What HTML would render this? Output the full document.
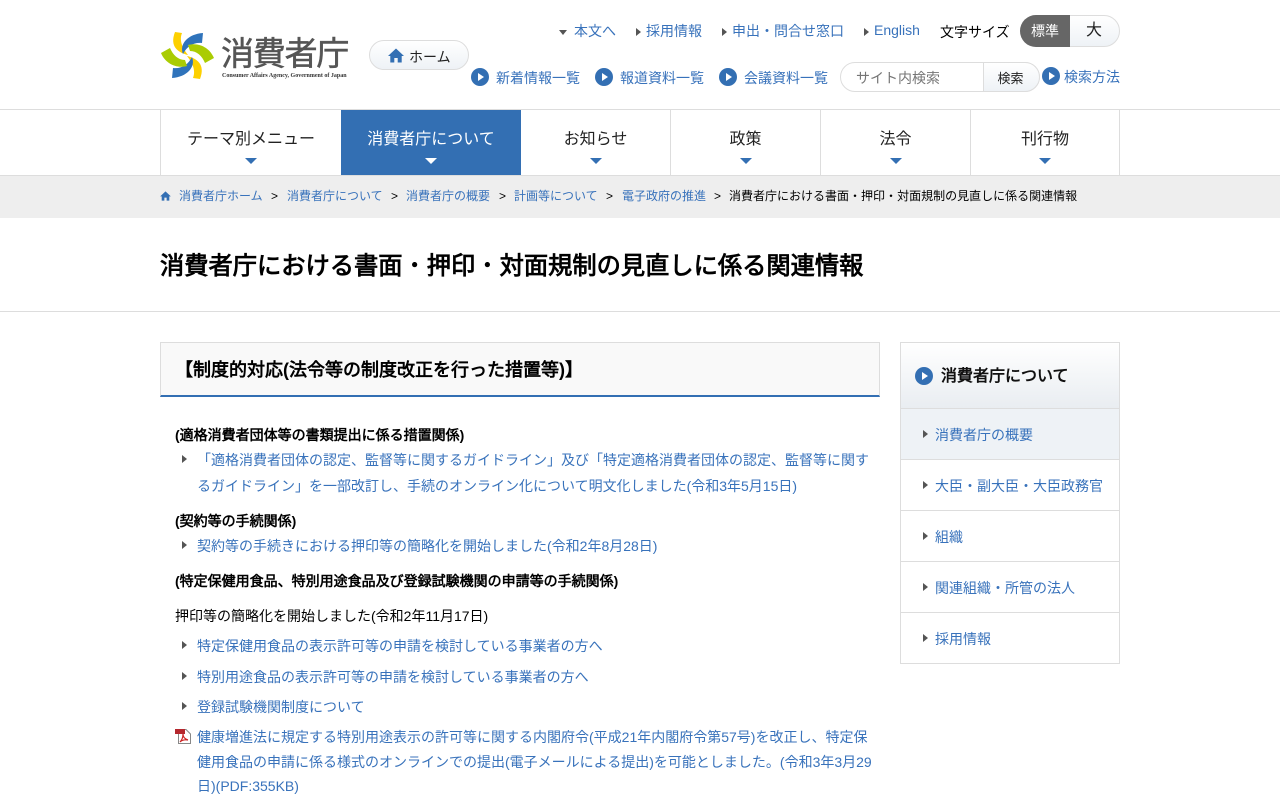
<!DOCTYPE html>
<html lang="ja"><head><meta charset="utf-8"><title>消費者庁における書面・押印・対面規制の見直しに係る関連情報</title>
<style>
*{box-sizing:border-box}
html,body{margin:0;padding:0;background:#fff}
body{width:1280px;height:800px;overflow:hidden;position:relative;font-family:"Liberation Sans","WenQuanYi Zen Hei",sans-serif;font-size:14px;color:#000}
.a{position:absolute;white-space:nowrap;line-height:20px}
.l{color:#3872bb}
.d{font-family:"Noto Sans CJK JP",sans-serif;font-weight:normal;line-height:0}
.tri{position:absolute;width:0;height:0;border-top:4px solid transparent;border-bottom:4px solid transparent;border-left:5px solid #555}
.trid{position:absolute;width:0;height:0;border-left:4.5px solid transparent;border-right:4.5px solid transparent;border-top:5px solid #555}
.dot{position:absolute;width:18px;height:18px;border-radius:50%;background:#336fb3}
.dot:after{content:"";position:absolute;left:7px;top:5px;border-top:4px solid transparent;border-bottom:4px solid transparent;border-left:6px solid #fff}
.nav{position:absolute;top:110px;height:65px;border-right:1px solid #ddd;text-align:center;font-size:16px;line-height:20px;padding-top:20px;color:#222}
.nav i{position:absolute;left:50%;margin-left:-6px;top:48px;width:0;height:0;border-left:6px solid transparent;border-right:6px solid transparent;border-top:6px solid #336fb3}
.side{position:absolute;left:900px;width:220px;height:51px;border:1px solid #ddd;border-top:0;font-size:14px;line-height:20px;padding:16px 0 0 34px;color:#3872bb}
.side:before{content:"";position:absolute;left:22px;top:21px;border-top:4px solid transparent;border-bottom:4px solid transparent;border-left:5px solid #555}
.bc{font-size:12px;top:186px}
.bl{color:#3872bb}
</style></head><body>

<svg class="a" style="left:159px;top:30px" width="58" height="51" viewBox="0 0 58 51">
<path d="M16 2 23 3C21 8 21 15 29 25 20 23 10 17 16 2Z" fill="#fdd000"/>
<path d="M44 3 43 13C35 12 28 16 24 24 20 14 29 4 44 3Z" fill="#2f73bb"/>
<path d="M29 15C40 12 51 18 55 28L46 33C43 26 38 21 31 21Z" fill="#aacc03"/>
<g transform="rotate(180 28.5 25.5)">
<path d="M16 2 23 3C21 8 21 15 29 25 20 23 10 17 16 2Z" fill="#fdd000"/>
<path d="M44 3 43 13C35 12 28 16 24 24 20 14 29 4 44 3Z" fill="#2f73bb"/>
<path d="M29 15C40 12 51 18 55 28L46 33C43 26 38 21 31 21Z" fill="#aacc03"/>
</g>
</svg>
<div class="a" style="left:221px;top:35px;font-size:33px;line-height:38px;color:#555;letter-spacing:-1.2px;-webkit-text-stroke:.5px #555">消費者庁</div>
<div class="a" style="left:222px;top:72px;font:bold 6px/8px 'Liberation Serif',serif;color:#333">Consumer Affairs Agency, Government of Japan</div>

<div class="a" style="left:369px;top:40px;width:100px;height:30px;border:1px solid #ddd;border-radius:15px;background:linear-gradient(#fff,#eef2f6)"></div>
<svg class="a" style="left:388px;top:48px" width="16" height="15" viewBox="0 0 16 15"><path d="M8 .5 0 8h2.3v6.5h4V10h3.4v4.5h4V8H16z" fill="#336fb3"/></svg>
<div class="a" style="left:409px;top:47px;color:#222">ホーム</div>

<i class="trid" style="left:559px;top:30px"></i><div class="a l" style="left:574px;top:21px">本文へ</div>
<i class="tri" style="left:636px;top:28px"></i><div class="a l" style="left:646px;top:21px">採用情報</div>
<i class="tri" style="left:722px;top:28px"></i><div class="a l" style="left:732px;top:21px">申出<span class="d">・</span>問合せ窓口</div>
<i class="tri" style="left:864px;top:28px"></i><div class="a l" style="left:874px;top:20px">English</div>
<div class="a" style="left:940px;top:22px">文字サイズ</div>
<div class="a" style="left:1020px;top:15px;width:100px;height:32px;border:1px solid #ddd;border-radius:16px;background:linear-gradient(#fff,#eef2f6)"></div>
<div class="a" style="left:1020px;top:15px;width:50px;height:32px;border-radius:16px 0 0 16px;background:#666;color:#fff;text-align:center;line-height:32px">標準</div>
<div class="a" style="left:1070px;top:15px;width:50px;height:32px;text-align:center;line-height:32px;font-size:16px;color:#222;padding-right:2px">大</div>

<i class="dot" style="left:471px;top:68px"></i><div class="a l" style="left:496px;top:68px">新着情報一覧</div>
<i class="dot" style="left:595px;top:68px"></i><div class="a l" style="left:620px;top:68px">報道資料一覧</div>
<i class="dot" style="left:719px;top:68px"></i><div class="a l" style="left:744px;top:68px">会議資料一覧</div>
<div class="a" style="left:840px;top:62px;width:200px;height:30px;border:1px solid #ddd;border-radius:15px"></div>
<div class="a" style="left:856px;top:68px;color:#757575">サイト内検索</div>
<div class="a" style="left:983px;top:62px;width:57px;height:30px;border:1px solid #ddd;border-radius:0 15px 15px 0;background:linear-gradient(#fff,#eef2f6);text-align:center;line-height:30px;font-size:13px;color:#222;padding-right:2px"><span style="position:relative;top:1px">検索</span></div>
<i class="dot" style="left:1042px;top:67px"></i><div class="a l" style="left:1064px;top:67px">検索方法</div>

<div class="a" style="left:0;top:109px;width:1280px;height:1px;background:#ddd"></div>
<div class="a" style="left:160px;top:110px;width:1px;height:65px;background:#ddd"></div>
<div class="nav" style="left:161px;width:180px;border-right:0">テーマ別メニュー<i></i></div>
<div class="nav" style="left:341px;width:180px;background:#336fb3;color:#fff;border:0">消費者庁について<i style="border-top-color:#fff"></i></div>
<div class="nav" style="left:521px;width:150px">お知らせ<i></i></div>
<div class="nav" style="left:671px;width:150px">政策<i></i></div>
<div class="nav" style="left:821px;width:150px">法令<i></i></div>
<div class="nav" style="left:971px;width:149px">刊行物<i></i></div>

<div class="a" style="left:0;top:175px;width:1280px;height:43px;background:#eee;border-top:1px solid #ddd"></div>
<svg class="a" style="left:160px;top:191px" width="11" height="10" viewBox="0 0 16 15"><path d="M8 .5 0 8h2.3v6.5h4V10h3.4v4.5h4V8H16z" fill="#336fb3"/></svg>
<div class="a bc bl" style="left:179px">消費者庁ホーム</div>
<div class="a bc" style="left:271px">&gt;</div>
<div class="a bc bl" style="left:287px">消費者庁について</div>
<div class="a bc" style="left:391px">&gt;</div>
<div class="a bc bl" style="left:406px">消費者庁の概要</div>
<div class="a bc" style="left:499px">&gt;</div>
<div class="a bc bl" style="left:514px">計画等について</div>
<div class="a bc" style="left:606px">&gt;</div>
<div class="a bc bl" style="left:622px">電子政府の推進</div>
<div class="a bc" style="left:714px">&gt;</div>
<div class="a bc" style="left:729px">消費者庁における書面<span class="d">・</span>押印<span class="d">・</span>対面規制の見直しに係る関連情報</div>

<h1 class="a" style="left:160px;top:250px;margin:0;font-size:24.25px;line-height:34px;font-weight:bold">消費者庁における書面<span class="d">・</span>押印<span class="d">・</span>対面規制の見直しに係る関連情報</h1>
<div class="a" style="left:0;top:311px;width:1280px;height:1px;background:#ddd"></div>

<div class="a" style="left:160px;top:342px;width:720px;height:55px;border:1px solid #ddd;border-bottom:2px solid #336fb3;background:#f9f9f9"></div>
<h2 class="a" style="left:175px;top:357px;margin:0;font-size:18px;line-height:26px;font-weight:bold">【制度的対応(法令等の制度改正を行った措置等)】</h2>

<div class="a" style="left:175px;top:425px;font-weight:bold">(適格消費者団体等の書類提出に係る措置関係)</div>
<i class="tri" style="left:182px;top:455px"></i>
<div class="a l" style="left:197px;top:450px">「適格消費者団体の認定、監督等に関するガイドライン」及び「特定適格消費者団体の認定、監督等に関す</div>
<div class="a l" style="left:197px;top:476px">るガイドライン」を一部改訂し、手続のオンライン化について明文化しました(令和3年5月15日)</div>
<div class="a" style="left:175px;top:511px;font-weight:bold">(契約等の手続関係)</div>
<i class="tri" style="left:182px;top:541px"></i>
<div class="a l" style="left:197px;top:536px">契約等の手続きにおける押印等の簡略化を開始しました(令和2年8月28日)</div>
<div class="a" style="left:175px;top:571px;font-weight:bold">(特定保健用食品、特別用途食品及び登録試験機関の申請等の手続関係)</div>
<div class="a" style="left:175px;top:606px">押印等の簡略化を開始しました(令和2年11月17日)</div>
<i class="tri" style="left:182px;top:641px"></i>
<div class="a l" style="left:197px;top:636px">特定保健用食品の表示許可等の申請を検討している事業者の方へ</div>
<i class="tri" style="left:182px;top:672px"></i>
<div class="a l" style="left:197px;top:667px">特別用途食品の表示許可等の申請を検討している事業者の方へ</div>
<i class="tri" style="left:182px;top:702px"></i>
<div class="a l" style="left:197px;top:697px">登録試験機関制度について</div>
<svg class="a" style="left:175px;top:729px" width="16" height="15" viewBox="0 0 16 15"><path d="M3.5.5H11L15.5 5v9.5h-12z" fill="#fff" stroke="#888"/><rect x="0" y="0" width="10" height="5" fill="#b5282e"/><path d="M5 13c2-2 3-5 3-8 0 3 2 5 5 6-3-.5-6 0-8 2z" fill="none" stroke="#c22" stroke-width="1.2"/></svg>
<div class="a l" style="left:197px;top:727px">健康増進法に規定する特別用途表示の許可等に関する内閣府令(平成21年内閣府令第57号)を改正し、特定保</div>
<div class="a l" style="left:197px;top:752px">健用食品の申請に係る様式のオンラインでの提出(電子メールによる提出)を可能としました。(令和3年3月29</div>
<div class="a l" style="left:197px;top:776px">日)(PDF:355KB)</div>

<div class="a" style="left:900px;top:342px;width:220px;height:67px;border:1px solid #ddd;background:linear-gradient(#fff,#e9edf1)"></div>
<i class="dot" style="left:915px;top:367px"></i>
<div class="a" style="left:941px;top:367px;font-size:16px;font-weight:bold;color:#111">消費者庁について</div>
<div class="side" style="top:409px;background:#eef2f6">消費者庁の概要</div>
<div class="side" style="top:460px">大臣<span class="d">・</span>副大臣<span class="d">・</span>大臣政務官</div>
<div class="side" style="top:511px">組織</div>
<div class="side" style="top:562px">関連組織<span class="d">・</span>所管の法人</div>
<div class="side" style="top:613px">採用情報</div>
</body></html>
